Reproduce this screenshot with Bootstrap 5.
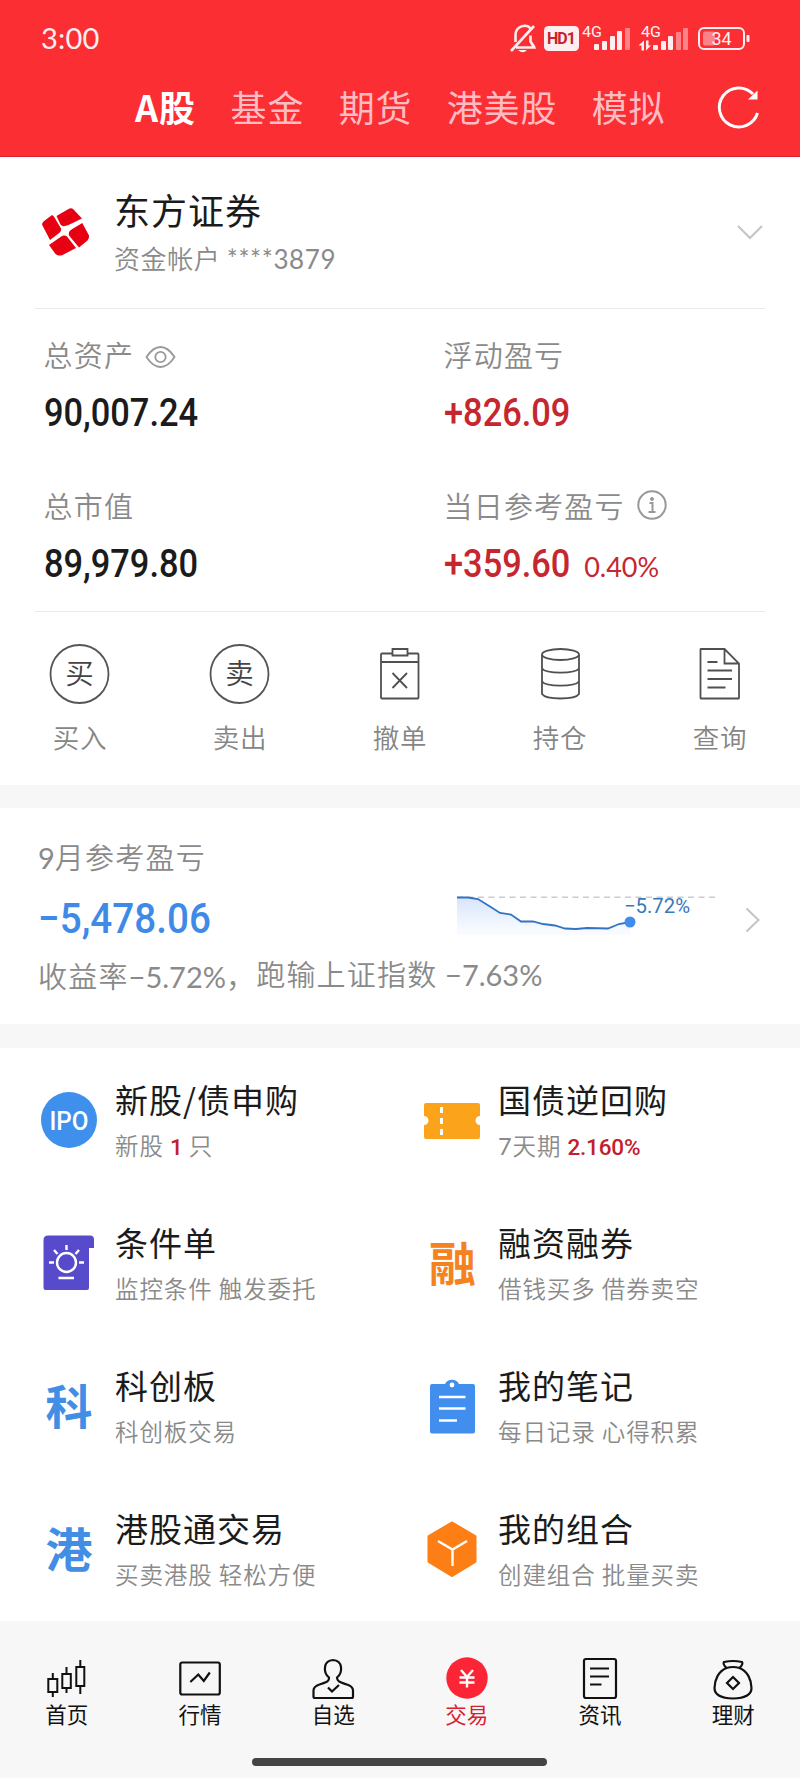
<!DOCTYPE html>
<html lang="zh-CN">
<head>
<meta charset="utf-8">
<meta name="viewport" content="width=device-width, initial-scale=1">
<title>交易</title>
<link rel="stylesheet" href="https://cdn.jsdelivr.net/npm/bootstrap@5.3.0/dist/css/bootstrap.min.css">
<style>
body{font-family:"Noto Sans CJK SC",sans-serif;font-weight:350;color:#1b1b1b;background:#fff;white-space:nowrap;overflow-x:hidden}
svg{display:block;flex:none;overflow:visible;font-weight:400}
svg text{font-family:Roboto,"Noto Sans CJK SC",sans-serif}
.lato{font-family:Lato,sans-serif;font-weight:400}
.topbar{background:#fa2e33;height:157px;border-bottom:1px solid #d8232f}
.statusbar{height:76px;padding:0 50px 0 41px}
.clock{font-size:29px;letter-spacing:.2px;color:#ffeef0}
.tabs{height:60px;padding:0 40px 0 135px}
.tabs a{font-size:36px;letter-spacing:.8px;line-height:58px;color:#ffbcc3;font-weight:400;text-decoration:none;margin-right:34.5px}
.tabs a.active{color:#fff;font-weight:700;letter-spacing:1px}
.account{height:151px;padding:29px 37px 0 41px}
.account h1{font-size:36px;line-height:46px;letter-spacing:1px;font-weight:400;margin:0}
.account p{font-size:26px;line-height:46px;margin:3px 0 0;color:#8a8a8a;letter-spacing:.6px}
.logo{margin:20px 23px 0 0}
.sep{height:1px;background:#ebebeb;margin:0 35px}
.asset{height:151px;padding:24px 0 0 43.5px}
.label-line{height:42px;line-height:42px;font-size:29px;letter-spacing:1.2px;color:#8a8a8a}
.label-line .lato{letter-spacing:0}
.value-line{margin-top:18px}
.hint{margin-left:11px}
.amount{font-family:Roboto,sans-serif;font-weight:500;font-size:38px;line-height:40px;display:inline-block;transform:scaleX(.905);transform-origin:left}
.rate{font-size:27px;margin-left:1px}
.up{color:#c6262e}
.blue{color:#3f8ae6}
.action{width:160px;height:173px;padding-top:32px}
.action span{font-size:26.5px;line-height:40px;letter-spacing:.8px;color:#858585;margin-top:13px}
.band{height:23px;background:#f7f7f7}
.band-last{height:24px}
.month{height:216px;padding:27px 34px 0 38px}
.month-top{height:105px}
.loss{margin-top:20px;height:44px}
.amount.big{font-size:42px;line-height:44px;transform:scaleX(.92)}
.summary{margin-top:14px}
.second{position:relative;top:-2px}
.chart{margin-top:51px}
.feature-grid{display:grid;grid-template-columns:383px 1fr;grid-auto-rows:143px;height:573px;padding:30px 0 0 41px;overflow:hidden}
.feature h2{font-size:33px;line-height:44px;letter-spacing:1px;font-weight:400;margin:-1px 0 0}
.feature p{font-size:23.5px;line-height:34px;letter-spacing:.9px;color:#8a8a8a;margin:7px 0 0}
.feature .txt{margin-left:18px}
.feature svg{margin-top:14px}
.num{font-family:Roboto,sans-serif;font-size:22.5px;letter-spacing:-.2px;font-weight:500;color:#c3202a}
.bottomnav{height:157px;background:#f7f7f7;position:relative}
.bottomnav a{width:133.33px;padding-top:34px;text-decoration:none;color:#111;font-size:21.5px;line-height:32px;font-weight:400}
.bottomnav a span{margin-top:-3px}
.bottomnav a.trade{color:#d81e33}
.homebar{position:absolute;left:252px;bottom:12px;width:295px;height:8px;border-radius:4px;background:#444}
</style>
</head>
<body>
<header class="topbar">
  <div class="statusbar d-flex align-items-center justify-content-between">
    <span class="clock lato">3:00</span>
    <svg width="242" height="32" viewBox="508 22 242 32" fill="none" stroke="#ffeef0" stroke-width="2.6">
      <path d="M515.500 42v-6.500c0-10 11-12 15-7M511 51l23-25M516 47.500h18l-3.500-6v-6M534.500 47.500l-4-6"/>
      <path d="M518 50h9q-4 4.500-9 0" fill="#ffeef0" stroke="none"/>
      <rect x="544" y="26" width="35" height="25" rx="4.5" fill="#ffeef0" stroke="none"/>
      <g stroke="none" fill="#ffeef0">
        <text x="547" y="44" font-size="16" font-weight="700" fill="#c4242c" textLength="29">HD1</text>
        <text x="582" y="37" font-size="15.500" textLength="20" lengthAdjust="spacingAndGlyphs">4G</text>
        <text x="641" y="37" font-size="15.500" textLength="20" lengthAdjust="spacingAndGlyphs">4G</text>
        <rect x="594" y="44" width="5" height="6" rx="1"/><rect x="602" y="41" width="5" height="9" rx="1"/><rect x="610" y="36" width="5" height="14" rx="1"/><rect x="617" y="31" width="5" height="19" rx="1"/><rect x="625" y="28" width="5" height="22" rx="1" opacity=".45"/>
        <rect x="653" y="45" width="5" height="5" rx="1"/><rect x="661" y="41" width="5" height="9" rx="1"/><rect x="668" y="36" width="5" height="14" rx="1"/><rect x="676" y="32" width="5" height="18" rx="1" opacity=".45"/><rect x="683" y="28" width="5" height="22" rx="1" opacity=".45"/>
        <path d="M638.500 45.500l5.500-5v10h-2.500v-5zM646 40.500h2.500v5h2.500l-5 5z"/>
        <rect x="703" y="31.500" width="12" height="14" rx="2" opacity=".45"/>
        <rect x="746.500" y="35" width="3" height="7" rx="1"/>
        <text x="711.500" y="45" font-size="18" textLength="20">34</text>
      </g>
      <rect x="699" y="28" width="45" height="21" rx="5" stroke-width="2"/>
    </svg>
  </div>
  <nav class="tabs d-flex align-items-center">
    <a class="active" href="#">A股</a><a href="#">基金</a><a href="#">期货</a><a href="#">港美股</a><a href="#">模拟</a>
    <svg class="ms-auto" width="42" height="44" viewBox="718 84.500 42 44"><path d="M757.500 113.500A19.500 19.500 0 1 1 753 94.500" fill="none" stroke="#fff" stroke-width="3"/><path d="M757.500 91v9h-9.500z" fill="#fff"/></svg>
  </nav>
</header>

<section>
  <div class="account d-flex">
    <svg width="50" height="50" viewBox="-.5 -1.500 50 50" class="logo" fill="#e60012"><path d="M1 18Q0 16 2 14L10.500 7.500Q12 8 13 10L19.500 21Q20 24 17 26L8.500 32.500z"/><path d="M15 8.500L27 1.500Q30 0 32 2L40.500 11 27 17.500Q21 20 19 17z"/><path d="M40.800 15.500L47.500 28Q48 31 46 33L37.500 40 27.500 28Q26.500 24 30 22z"/><path d="M7.500 37.500L19 29.500Q23 27 25.500 29L34.500 40.500 21 47.500Q17 49 14 46.500z"/></svg>
    <div><h1>东方证券</h1><p>资金帐户 <span class="lato">****3879</span></p></div>
    <svg class="ms-auto" width="26" height="90" viewBox="737 186 26 90"><path d="M738 226l12 12 12-12" fill="none" stroke="#c4c4c4" stroke-width="2"/></svg>
  </div>
  <div class="sep"></div>
  <div class="d-flex">
    <div class="asset w-50"><div class="label-line d-flex align-items-center">总资产
      <svg class="hint" width="32" height="26" viewBox="146 341.500 32 26" fill="none" stroke="#999" stroke-width="1.800"><path d="M147.500 357.500Q154 347.500 161.500 347.500Q169 347.500 175.500 357.500Q169 367.500 161.500 367.500Q154 367.500 147.500 357.500z"/><circle cx="161.500" cy="357.500" r="5.200"/></svg></div>
      <div class="value-line"><span class="amount">90,007.24</span></div></div>
    <div class="asset w-50"><div class="label-line">浮动盈亏</div><div class="value-line"><span class="amount up">+826.09</span></div></div>
  </div>
  <div class="d-flex">
    <div class="asset w-50"><div class="label-line">总市值</div><div class="value-line"><span class="amount">89,979.80</span></div></div>
    <div class="asset w-50"><div class="label-line d-flex align-items-center">当日参考盈亏
      <svg class="hint" width="32" height="32" viewBox="636 489 32 32" fill="none" stroke="#999" stroke-width="2"><circle cx="652" cy="505" r="13.700"/><path d="M649.500 503h3v9M648.500 512h7"/><circle cx="652" cy="499" r="1.500" fill="#999" stroke-width="1"/></svg></div>
      <div class="value-line"><span class="amount up">+359.60</span><span class="rate up lato">0.40%</span></div></div>
  </div>
  <div class="sep"></div>
  <div class="d-flex">
    <div class="action d-flex flex-column align-items-center">
      <svg width="60" height="60" viewBox="0.500 0 60 60"><circle cx="30" cy="30" r="29" fill="none" stroke="#555" stroke-width="1.800"/><text x="30" y="40" font-size="28.500" font-weight="350" text-anchor="middle" fill="#444">买</text></svg><span>买入</span></div>
    <div class="action d-flex flex-column align-items-center">
      <svg width="60" height="60" viewBox="0.500 0 60 60"><circle cx="30" cy="30" r="29" fill="none" stroke="#555" stroke-width="1.800"/><text x="30" y="40" font-size="28.500" font-weight="350" text-anchor="middle" fill="#444">卖</text></svg><span>卖出</span></div>
    <div class="action d-flex flex-column align-items-center">
      <svg width="60" height="60" viewBox="370 644 60 60" fill="none" stroke="#505050" stroke-width="1.800"><path d="M392 653.500h-10q-1 0-1 1v43q0 1 1 1h35.500q1 0 1-1v-43q0-1-1-1h-10M381 662h37.500M392.500 649h15v6.500h-15zM392.500 673l14.500 15M407 673l-14.500 15"/></svg><span>撤单</span></div>
    <div class="action d-flex flex-column align-items-center">
      <svg width="60" height="60" viewBox="530 644 60 60" fill="none" stroke="#505050" stroke-width="1.800"><ellipse cx="560.500" cy="654.500" rx="18.500" ry="5.500"/><path d="M542 655v39c4 6 33 6 37 0v-39M542 668.500c4 5.500 33 5.500 37 0M542 681.500c4 5.500 33 5.500 37 0"/></svg><span>持仓</span></div>
    <div class="action d-flex flex-column align-items-center">
      <svg width="60" height="60" viewBox="690 644 60 60" fill="none" stroke="#505050" stroke-width="1.800"><path d="M724.500 649H701q-.5 0-.5.500v48.500q0 .5.500.5h37.500q.5 0 .5-.5v-34.500zM724.500 649v14.500H739M707.500 662h10M707.500 670.500H732M707.500 679H732M707.500 687.500h18"/></svg><span>查询</span></div>
  </div>
</section>
<div class="band"></div>

<section class="month">
  <div class="month-top d-flex justify-content-between">
    <div>
      <div class="label-line"><span class="lato">9</span>月参考盈亏</div>
      <div class="loss"><span class="amount big blue">−5,478.06</span></div>
    </div>
    <svg class="chart" width="310" height="54" viewBox="456 886 310 54">
      <defs><linearGradient id="area" x1="0" y1="0" x2="0" y2="1"><stop offset="0" stop-color="#d6e3fa"/><stop offset="1" stop-color="#f6f9ff" stop-opacity=".6"/></linearGradient></defs>
      <path d="M457 897.500H468L478 899L500 913L511 914.500L521 921.500H533L543 924L555 925.500L565 928.500L576 929L587 928L608 928.500L619 924L630 922V935H457z" fill="url(#area)"/>
      <path d="M457 897.200H717" stroke="#ccc" stroke-width="1.400" stroke-dasharray="6 4.500" fill="none"/>
      <path d="M457 897.500H468L478 899L490 906.500L500 913L511 914.500L521 921.500H533L543 924L555 925.500L565 928.500L576 929L587 928L608 928.500L619 924L630 922" stroke="#3273c4" stroke-width="1.800" fill="none"/>
      <circle cx="630" cy="922" r="5.500" fill="#3f8cec"/>
      <text x="624" y="913" font-size="20" fill="#3a78bd" textLength="66" lengthAdjust="spacingAndGlyphs">−5.72%</text>
      <path d="M746.500 908.500l12 11.500-12 11.500" fill="none" stroke="#c4c4c4" stroke-width="2"/>
    </svg>
  </div>
  <div class="label-line summary">收益率<span class="lato">−5.72%</span>，<span class="second">跑输上证指数 <span class="lato">−7.63%</span></span></div>
</section>
<div class="band band-last"></div>

<section class="feature-grid">
  <div class="feature d-flex"><svg width="56" height="56" viewBox="41 1092 56 56"><circle cx="69" cy="1120" r="28" fill="#3e90ec"/><text x="49.500" y="1129.500" font-size="26" font-weight="500" fill="#fff" textLength="39" lengthAdjust="spacingAndGlyphs">IPO</text></svg>
    <div class="txt"><h2>新股/债申购</h2><p>新股 <b class="num">1</b> 只</p></div></div>
  <div class="feature d-flex"><svg width="56" height="56" viewBox="424 1092 56 56"><path d="M426 1103h52q2 0 2 2v11a4.500 4.500 0 0 0 0 9v12q0 2-2 2h-52q-2 0-2-2v-12a4.500 4.500 0 0 0 0-9v-11q0-2 2-2z" fill="#fca31c"/><path d="M441.500 1107v6M441.500 1118v6M441.500 1129v6" stroke="#fff" stroke-width="3"/></svg>
    <div class="txt"><h2>国债逆回购</h2><p><span class="lato">7</span>天期 <b class="num">2.160%</b></p></div></div>

  <div class="feature d-flex"><svg width="56" height="56" viewBox="41 1235 56 56"><path d="M48 1235.500h42q4 0 4 4v8.500h-5v40q0 2-2 2H45.500q-2 0-2-2v-48q0-4.500 4.500-4.500z" fill="#584bcb"/><g fill="none" stroke="#fff" stroke-width="2.400"><circle cx="66.500" cy="1262.500" r="9.500"/><path d="M66.500 1245v5M54 1250l3.500 4M79 1250l-3.500 4M49 1262.500h5M79 1262.500h5M58.500 1278H74"/></g></svg>
    <div class="txt"><h2>条件单</h2><p>监控条件 触发委托</p></div></div>
  <div class="feature d-flex"><svg width="56" height="56" viewBox="424 1235 56 56"><text x="452.500" y="1281" font-size="47" font-weight="700" fill="#f58220" text-anchor="middle">融</text></svg>
    <div class="txt"><h2>融资融券</h2><p>借钱买多 借券卖空</p></div></div>

  <div class="feature d-flex"><svg width="56" height="56" viewBox="41 1378 56 56"><text x="69" y="1424" font-size="47" font-weight="700" fill="#428ee4" text-anchor="middle">科</text></svg>
    <div class="txt"><h2>科创板</h2><p>科创板交易</p></div></div>
  <div class="feature d-flex"><svg width="56" height="56" viewBox="424 1379 56 56"><path d="M432 1385h13a8 8 0 0 1 14 0h14q2 0 2 2v45.500q0 2-2 2h-41q-2 0-2-2V1387q0-2 2-2z" fill="#418eee"/><circle cx="452" cy="1386" r="2.400" fill="#fff"/><path d="M439 1398h26.500M439 1409.500h26.500M439 1421.500h18" stroke="#fff" stroke-width="2.600"/></svg>
    <div class="txt"><h2>我的笔记</h2><p>每日记录 心得积累</p></div></div>

  <div class="feature d-flex"><svg width="56" height="56" viewBox="41 1521 56 56"><text x="69" y="1567" font-size="47" font-weight="700" fill="#428ee4" text-anchor="middle">港</text></svg>
    <div class="txt"><h2>港股通交易</h2><p>买卖港股 轻松方便</p></div></div>
  <div class="feature d-flex"><svg width="56" height="56" viewBox="424 1521 56 56"><path d="M452 1523l23 13.500v25L452 1575.500l-23-14v-25z" fill="#fd7e14" stroke="#fd7e14" stroke-width="3" stroke-linejoin="round"/><path d="M438 1541l14.500 8.500 14.500-8.500M452.500 1549v17" fill="none" stroke="#fff" stroke-width="2.400"/></svg>
    <div class="txt"><h2>我的组合</h2><p>创建组合 批量买卖</p></div></div>
</section>

<nav class="bottomnav d-flex">
  <a href="#" class="d-flex flex-column align-items-center"><svg width="46" height="46" viewBox="43.700 1655 46 46" fill="none" stroke="#111" stroke-width="2"><path d="M48 1679h9v13h-9zM52.500 1673v6M52.500 1692v5M62 1674h8.500v14H62zM66.200 1667v7M66.200 1688v5M76 1667h8v19h-8zM80 1660v7M80 1686v8"/></svg><span>首页</span></a>
  <a href="#" class="d-flex flex-column align-items-center"><svg width="46" height="46" viewBox="176.700 1655 46 46" fill="none" stroke="#111" stroke-width="2.200"><rect x="180" y="1662.500" width="39.500" height="32" rx="2"/><path d="M190 1682l8-7.500 5.500 6.500 6-8.500"/></svg><span>行情</span></a>
  <a href="#" class="d-flex flex-column align-items-center"><svg width="46" height="46" viewBox="310 1655 46 46" fill="none" stroke="#111" stroke-width="2.200"><path d="M329 1677.500c-6-5-6-17 4-17.500c10 .5 10 12.500 4 17.500c0 5 5 5 10 7q6 2 6 6v6q0 1.500-1.500 1.500h-36.500q-1.500 0-1.500-1.500v-6q0-4 6-6c5-2 10-2 9.500-7zM328 1687.500l4 4 7-6.500"/></svg><span>自选</span></a>
  <a href="#" class="d-flex flex-column align-items-center trade"><svg width="46" height="46" viewBox="443.500 1655 46 46"><circle cx="466.500" cy="1678" r="20.700" fill="#fb2536"/><path d="M460.500 1670l6 7 6-7M459 1677.500h15M459 1682.500h15M466.500 1677v10.500" fill="none" stroke="#fff" stroke-width="2.400"/></svg><span>交易</span></a>
  <a href="#" class="d-flex flex-column align-items-center"><svg width="46" height="46" viewBox="577 1655 46 46" fill="none" stroke="#111" stroke-width="2.200"><rect x="584" y="1659" width="32" height="39" rx="2"/><path d="M590 1668.500h19M590 1676.500h19M590 1684.500h11.500"/></svg><span>资讯</span></a>
  <a href="#" class="d-flex flex-column align-items-center"><svg width="46" height="46" viewBox="710 1655 46 46" fill="none" stroke="#111" stroke-width="2.200"><path d="M726.500 1668q-4-4-2.500-6q9-2 18 0q1.500 2-2.500 6q-6.500-2-13 0c-8 3-12 12-12 20q0 10 18.500 10.500Q751.500 1698 751.500 1688c0-8-4-17-12-20M733 1677l6 6-6 6-6-6z"/></svg><span>理财</span></a>
  <div class="homebar"></div>
</nav>
<script src="https://cdn.jsdelivr.net/npm/bootstrap@5.3.0/dist/js/bootstrap.bundle.min.js"></script>
</body>
</html>
